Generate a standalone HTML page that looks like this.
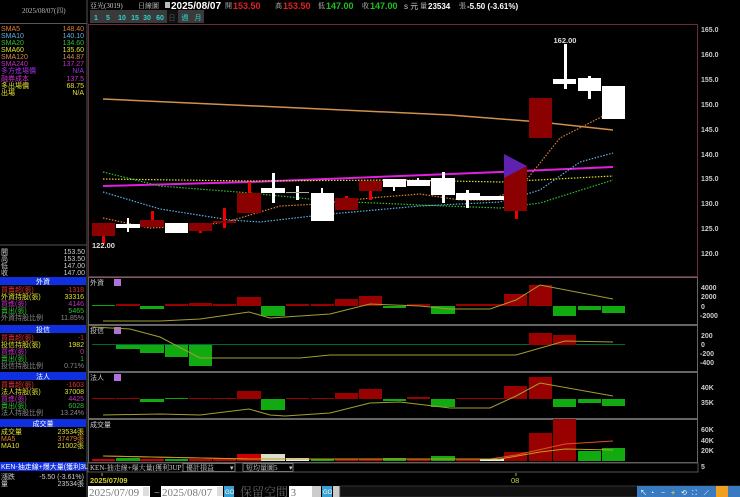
<!DOCTYPE html>
<html><head><meta charset="utf-8"><style>
html,body{margin:0;padding:0;background:#000;width:740px;height:497px;overflow:hidden}
svg{display:block}
text{font-family:"Liberation Sans","Noto Sans CJK TC",sans-serif;font-size:7px}
.s{font-family:"Liberation Serif","Noto Serif CJK SC",serif}
</style></head><body>
<svg width="740" height="497" viewBox="0 0 740 497" xmlns="http://www.w3.org/2000/svg">
<rect width="740" height="497" fill="#000"/>
<!-- left panel -->
<line x1="87" y1="0" x2="87" y2="497" stroke="#555" stroke-width="1"/>
<text x="22" y="13" fill="#bbb" class="s">2025/08/07(四)</text>
<line x1="0" y1="23.5" x2="87" y2="23.5" stroke="#555"/>
<g class="s">
<text x="1" y="31" fill="#e08030">SMA5</text><text x="84" y="31" fill="#e08030" text-anchor="end">148.40</text>
<text x="1" y="38" fill="#60b0e0">SMA10</text><text x="84" y="38" fill="#60b0e0" text-anchor="end">140.10</text>
<text x="1" y="45" fill="#30c030">SMA20</text><text x="84" y="45" fill="#30c030" text-anchor="end">134.60</text>
<text x="1" y="52" fill="#e0e030">SMA60</text><text x="84" y="52" fill="#e0e030" text-anchor="end">135.60</text>
<text x="1" y="59" fill="#d09050">SMA120</text><text x="84" y="59" fill="#d09050" text-anchor="end">144.87</text>
<text x="1" y="66" fill="#c030c0">SMA240</text><text x="84" y="66" fill="#c030c0" text-anchor="end">137.27</text>
<text x="1" y="73" fill="#a030e0">多方進場價</text><text x="84" y="73" fill="#a030e0" text-anchor="end">N/A</text>
<text x="1" y="81" fill="#d030d0">融券成本</text><text x="84" y="81" fill="#d030d0" text-anchor="end">137.5</text>
<text x="1" y="88" fill="#e0e030">多出場價</text><text x="84" y="88" fill="#e0e030" text-anchor="end">68.75</text>
<text x="1" y="95" fill="#e0e030">出場</text><text x="84" y="95" fill="#e0e030" text-anchor="end">N/A</text>
</g>
<line x1="0" y1="245" x2="87" y2="245" stroke="#555"/>
<g class="s" fill="#ccc">
<text x="1" y="254">開</text><text x="85" y="254" text-anchor="end">153.50</text>
<text x="1" y="261">高</text><text x="85" y="261" text-anchor="end">153.50</text>
<text x="1" y="268">低</text><text x="85" y="268" text-anchor="end">147.00</text>
<text x="1" y="275">收</text><text x="85" y="275" text-anchor="end">147.00</text>
</g>
<!-- section boxes -->
<g class="s">
<rect x="0" y="277" width="86" height="8" fill="#1030e0"/><text x="43" y="284" fill="#fff" text-anchor="middle">外資</text>
<text x="1" y="292" fill="#e03030">買賣超(張)</text><text x="84" y="292" fill="#e03030" text-anchor="end">-1318</text>
<text x="1" y="299" fill="#e0e030">外資持股(張)</text><text x="84" y="299" fill="#e0e030" text-anchor="end">33316</text>
<text x="1" y="306" fill="#c030c0">買進(張)</text><text x="84" y="306" fill="#c030c0" text-anchor="end">4146</text>
<text x="1" y="313" fill="#30c030">賣出(張)</text><text x="84" y="313" fill="#30c030" text-anchor="end">5465</text>
<text x="1" y="320" fill="#888">外資持股比例</text><text x="84" y="320" fill="#888" text-anchor="end">11.85%</text>
<rect x="0" y="325" width="86" height="8" fill="#1030e0"/><text x="43" y="332" fill="#fff" text-anchor="middle">投信</text>
<text x="1" y="340" fill="#e03030">買賣超(張)</text><text x="84" y="340" fill="#e03030" text-anchor="end">-1</text>
<text x="1" y="347" fill="#e0e030">投信持股(張)</text><text x="84" y="347" fill="#e0e030" text-anchor="end">1982</text>
<text x="1" y="354" fill="#c030c0">買進(張)</text><text x="84" y="354" fill="#c030c0" text-anchor="end">0</text>
<text x="1" y="361" fill="#30c030">賣出(張)</text><text x="84" y="361" fill="#30c030" text-anchor="end">1</text>
<text x="1" y="368" fill="#888">投信持股比例</text><text x="84" y="368" fill="#888" text-anchor="end">0.71%</text>
<rect x="0" y="372" width="86" height="8" fill="#1030e0"/><text x="43" y="379" fill="#fff" text-anchor="middle">法人</text>
<text x="1" y="387" fill="#e03030">買賣超(張)</text><text x="84" y="387" fill="#e03030" text-anchor="end">-1603</text>
<text x="1" y="394" fill="#e0e030">法人持股(張)</text><text x="84" y="394" fill="#e0e030" text-anchor="end">37008</text>
<text x="1" y="401" fill="#c030c0">買進(張)</text><text x="84" y="401" fill="#c030c0" text-anchor="end">4425</text>
<text x="1" y="408" fill="#30c030">賣出(張)</text><text x="84" y="408" fill="#30c030" text-anchor="end">6028</text>
<text x="1" y="415" fill="#888">法人持股比例</text><text x="84" y="415" fill="#888" text-anchor="end">13.24%</text>
<rect x="0" y="419" width="86" height="8" fill="#1030e0"/><text x="43" y="426" fill="#fff" text-anchor="middle">成交量</text>
<text x="1" y="434" fill="#e0e030">成交量</text><text x="84" y="434" fill="#e0e030" text-anchor="end">23534張</text>
<text x="1" y="441" fill="#e08030">MA5</text><text x="84" y="441" fill="#e08030" text-anchor="end">37479張</text>
<text x="1" y="448" fill="#e0e030">MA10</text><text x="84" y="448" fill="#e0e030" text-anchor="end">21002張</text>
<rect x="0" y="462" width="86" height="9" fill="#1030e0"/><text x="1" y="469" fill="#fff">KEN-抽走線+爆大量(獲利3UP)</text>
<text x="1" y="479" fill="#ccc">漲跌</text><text x="84" y="479" fill="#ccc" text-anchor="end">-5.50 (-3.61%)</text>
<text x="1" y="486" fill="#ccc">量</text><text x="84" y="486" fill="#ccc" text-anchor="end">23534張</text>
</g>
<!-- header -->
<text x="90" y="8" fill="#ccc" class="s">亞光(3019)</text>
<text x="138" y="8" fill="#ccc" class="s">日線圖</text>
<rect x="165" y="2" width="5" height="6" fill="#bbb"/>
<text x="171" y="9" fill="#fff" font-weight="bold" style="font-size:10px">2025/08/07</text>
<text x="225" y="8" fill="#ccc" class="s">開</text><text x="233" y="9" fill="#e02020" font-weight="bold" style="font-size:9px">153.50</text>
<text x="275" y="8" fill="#ccc" class="s">高</text><text x="283" y="9" fill="#e02020" font-weight="bold" style="font-size:9px">153.50</text>
<text x="318" y="8" fill="#ccc" class="s">低</text><text x="326" y="9" fill="#20c020" font-weight="bold" style="font-size:9px">147.00</text>
<text x="362" y="8" fill="#ccc" class="s">收</text><text x="370" y="9" fill="#20c020" font-weight="bold" style="font-size:9px">147.00</text>
<text x="404" y="9" fill="#ccc" style="font-size:8px">s 元</text>
<text x="420" y="8" fill="#ccc" class="s">量</text><text x="428" y="9" fill="#fff" font-weight="bold" style="font-size:8px">23534</text>
<text x="459" y="8" fill="#ccc" class="s">張</text><text x="467" y="9" fill="#fff" font-weight="bold" style="font-size:8px">-5.50 (-3.61%)</text>
<g style="font-size:8px" font-weight="bold">
<rect x="90" y="10" width="114" height="13" fill="#3a3a3a"/>
<rect x="167" y="10" width="11" height="13" fill="#111"/>
<text x="96" y="20" fill="#30d0d0" text-anchor="middle">1</text>
<text x="108" y="20" fill="#30d0d0" text-anchor="middle">5</text>
<text x="122" y="20" fill="#30d0d0" text-anchor="middle">10</text>
<text x="135" y="20" fill="#30d0d0" text-anchor="middle">15</text>
<text x="147" y="20" fill="#30d0d0" text-anchor="middle">30</text>
<text x="160" y="20" fill="#30d0d0" text-anchor="middle">60</text>
<text x="172" y="20" fill="#555" text-anchor="middle" font-weight="normal">日</text>
<text x="185" y="20" fill="#30d0d0" text-anchor="middle" font-weight="normal">週</text>
<text x="198" y="20" fill="#30d0d0" text-anchor="middle" font-weight="normal">月</text>
</g>
<!-- main chart frame -->
<rect x="88.5" y="24.5" width="609" height="252" fill="none" stroke="#6b2a3a"/>
<g fill="#ccc" font-weight="bold" style="font-size:7.5px">
<text x="701" y="32">165.0</text><text x="701" y="57">160.0</text><text x="701" y="82">155.0</text>
<text x="701" y="107">150.0</text><text x="701" y="132">145.0</text><text x="701" y="157">140.0</text>
<text x="701" y="181">135.0</text><text x="701" y="206">130.0</text><text x="701" y="231">125.0</text><text x="701" y="256">120.0</text>
</g>
<!-- MA lines -->
<polyline points="103,99 300,108 450,115 540,122 613,130" fill="none" stroke="#d09050" stroke-width="1.5"/>
<polyline points="103,186 250,182 400,176 500,172 613,167" fill="none" stroke="#e020e0" stroke-width="2"/>
<polyline points="103,179 250,181 400,180 500,182 613,176" fill="none" stroke="#e0e030" stroke-width="1.2" stroke-dasharray="1.5,1.5"/>
<polyline points="103,172 160,186 250,193 330,201 420,205 500,208 540,203 613,180" fill="none" stroke="#30c030" stroke-width="1.2" stroke-dasharray="1.5,1.5"/>
<polyline points="103,192 160,209 230,220 260,222 330,214 420,206 500,202 540,190 580,162 613,153" fill="none" stroke="#60b0e0" stroke-width="1.2" stroke-dasharray="1.5,1.5"/>
<polyline points="103,218 150,228 200,226 230,221 280,206 320,204 370,198 420,194 460,200 490,200 520,188 560,138 613,111" fill="none" stroke="#e08030" stroke-width="1.2" stroke-dasharray="1.5,1.5"/>
<!-- candles -->
<g>
<rect x="102" y="236" width="3" height="8" fill="#e00"/><rect x="92" y="223" width="23" height="13" fill="#8b0000"/>
<rect x="127" y="218" width="2" height="14" fill="#fff"/><rect x="116" y="224" width="24" height="4" fill="#fff"/>
<rect x="151" y="211" width="3" height="10" fill="#e00"/><rect x="140" y="220" width="24" height="7" fill="#8b0000"/>
<rect x="165" y="223" width="23" height="10" fill="#fff"/>
<rect x="199" y="228" width="3" height="5" fill="#e00"/><rect x="189" y="223" width="23" height="8" fill="#8b0000"/>
<rect x="223" y="208" width="3" height="20" fill="#e00"/><rect x="213" y="221" width="23" height="2" fill="#8b0000"/>
<rect x="248" y="182" width="3" height="30" fill="#e00"/><rect x="237" y="193" width="24" height="20" fill="#8b0000"/>
<rect x="272" y="173" width="3" height="30" fill="#fff"/><rect x="261" y="188" width="24" height="5" fill="#fff"/>
<rect x="296" y="186" width="3" height="14" fill="#fff"/><rect x="286" y="192" width="23" height="1" fill="#aaa"/>
<rect x="321" y="188" width="2" height="10" fill="#fff"/><rect x="311" y="193" width="23" height="28" fill="#fff"/>
<rect x="345" y="196" width="3" height="4" fill="#e00"/><rect x="335" y="198" width="23" height="12" fill="#8b0000"/>
<rect x="369" y="190" width="3" height="10" fill="#e00"/><rect x="359" y="181" width="23" height="10" fill="#8b0000"/>
<rect x="393" y="179" width="2" height="12" fill="#fff"/><rect x="383" y="179" width="23" height="8" fill="#fff"/>
<rect x="417" y="178" width="2" height="8" fill="#fff"/><rect x="407" y="180" width="23" height="6" fill="#fff"/>
<rect x="442" y="172" width="3" height="31" fill="#fff"/><rect x="431" y="178" width="24" height="17" fill="#fff"/>
<rect x="466" y="190" width="3" height="18" fill="#fff"/><rect x="456" y="193" width="24" height="7" fill="#fff"/>
<rect x="480" y="196" width="24" height="4" fill="#fff"/>
<rect x="515" y="211" width="3" height="8" fill="#e00"/><rect x="504" y="166" width="23" height="45" fill="#8b0000"/>
<polygon points="504,154 527,166 504,178" fill="#6020b0"/>
<rect x="529" y="98" width="23" height="40" fill="#8b0000"/>
<rect x="564" y="44" width="3" height="45" fill="#fff"/><rect x="553" y="79" width="23" height="5" fill="#fff"/>
<rect x="588" y="76" width="3" height="23" fill="#fff"/><rect x="578" y="78" width="23" height="13" fill="#fff"/>
<rect x="602" y="86" width="23" height="33" fill="#fff"/>
</g>
<text x="565" y="43" fill="#ddd" text-anchor="middle" font-weight="bold" style="font-size:7.5px">162.00</text>
<text x="92" y="248" fill="#ddd" font-weight="bold" style="font-size:7.5px">122.00</text>
<!-- sub panels frames -->
<g fill="none" stroke="#666">
<rect x="88.5" y="277.5" width="609" height="47"/>
<rect x="88.5" y="325.5" width="609" height="46"/>
<rect x="88.5" y="372.5" width="609" height="46"/>
<rect x="88.5" y="419.5" width="609" height="43"/>
</g>
<g class="s" fill="#ccc">
<text x="90" y="285">外資</text><text x="90" y="333">投信</text><text x="90" y="380">法人</text><text x="90" y="427">成交量</text>
</g>
<rect x="114" y="279" width="7" height="7" fill="#b070e0"/><rect x="114" y="327" width="7" height="7" fill="#b070e0"/><rect x="114" y="374" width="7" height="7" fill="#b070e0"/>
<!-- panel1 外資 -->
<g>
<rect x="92" y="305" width="23" height="1" fill="#0a0"/><rect x="116" y="304" width="24" height="2" fill="#900"/>
<rect x="140" y="306" width="24" height="3" fill="#1a1"/><rect x="165" y="304" width="23" height="2" fill="#900"/>
<rect x="189" y="303" width="23" height="3" fill="#900"/><rect x="213" y="304" width="23" height="2" fill="#900"/>
<rect x="237" y="297" width="24" height="9" fill="#900"/><rect x="261" y="306" width="24" height="10" fill="#1a1"/>
<rect x="286" y="304" width="23" height="2" fill="#900"/><rect x="311" y="304" width="23" height="2" fill="#900"/>
<rect x="335" y="299" width="23" height="7" fill="#900"/><rect x="359" y="296" width="23" height="10" fill="#900"/>
<rect x="383" y="306" width="23" height="2" fill="#1a1"/><rect x="407" y="304" width="23" height="2" fill="#900"/>
<rect x="431" y="306" width="24" height="8" fill="#1a1"/><rect x="456" y="304" width="24" height="2" fill="#900"/>
<rect x="480" y="304" width="24" height="2" fill="#900"/><rect x="504" y="294" width="23" height="12" fill="#900"/>
<rect x="529" y="285" width="23" height="21" fill="#900"/><rect x="553" y="306" width="23" height="10" fill="#1a1"/>
<rect x="578" y="306" width="23" height="4" fill="#1a1"/><rect x="602" y="306" width="23" height="7" fill="#1a1"/>
<polyline points="103,321 160,321 200,319 249,312 270,318 285,317 330,314 370,304 420,306 450,309 490,309 516,300 540,285 613,299" fill="none" stroke="#a0a030"/>
</g>
<g fill="#ccc" font-weight="bold" style="font-size:7px">
<text x="701" y="290">4000</text><text x="701" y="299">2000</text><text x="701" y="309">0</text><text x="700" y="318">-2000</text>
<text x="701" y="338">200</text><text x="701" y="347">0</text><text x="700" y="356">-200</text><text x="700" y="365">-400</text>
<text x="701" y="390">40K</text><text x="701" y="405">35K</text>
<text x="701" y="432">60K</text><text x="701" y="443">40K</text><text x="701" y="453">20K</text><text x="701" y="469">5</text>
</g>
<!-- panel2 投信 -->
<g>
<rect x="92" y="344" width="533" height="1" fill="#063"/>
<rect x="116" y="345" width="24" height="4" fill="#1a1"/><rect x="140" y="345" width="24" height="8" fill="#1a1"/>
<rect x="165" y="345" width="23" height="12" fill="#1a1"/><rect x="189" y="345" width="23" height="21" fill="#1a1"/>
<rect x="529" y="333" width="23" height="12" fill="#900"/><rect x="553" y="335" width="23" height="10" fill="#900"/>
<polyline points="92,327 130,329 160,337 200,358 300,358 330,355 516,355 565,341 613,342" fill="none" stroke="#a0a030"/>
</g>
<!-- panel3 法人 -->
<g>
<rect x="92" y="398" width="23" height="1" fill="#900"/><rect x="116" y="398" width="24" height="1" fill="#900"/>
<rect x="140" y="399" width="24" height="3" fill="#1a1"/><rect x="165" y="398" width="23" height="1" fill="#0a0"/>
<rect x="189" y="398" width="23" height="1" fill="#900"/><rect x="213" y="398" width="23" height="1" fill="#900"/>
<rect x="237" y="391" width="24" height="8" fill="#900"/><rect x="261" y="399" width="24" height="11" fill="#1a1"/>
<rect x="286" y="398" width="23" height="1" fill="#900"/><rect x="311" y="398" width="23" height="1" fill="#900"/>
<rect x="335" y="393" width="23" height="6" fill="#900"/><rect x="359" y="389" width="23" height="10" fill="#900"/>
<rect x="383" y="399" width="23" height="2" fill="#1a1"/><rect x="407" y="397" width="23" height="2" fill="#900"/>
<rect x="431" y="399" width="24" height="8" fill="#1a1"/><rect x="456" y="398" width="24" height="1" fill="#900"/>
<rect x="480" y="398" width="24" height="1" fill="#900"/><rect x="504" y="386" width="23" height="13" fill="#900"/>
<rect x="529" y="377" width="23" height="22" fill="#900"/><rect x="553" y="399" width="23" height="8" fill="#1a1"/>
<rect x="578" y="399" width="23" height="4" fill="#1a1"/><rect x="602" y="399" width="23" height="7" fill="#1a1"/>
<polyline points="103,415 160,414 200,415 249,409 270,415 285,416 330,413 370,403 400,402 450,408 490,408 516,396 540,383 613,396" fill="none" stroke="#a0a030"/>
</g>
<!-- panel4 volume -->
<g>
<rect x="92" y="459" width="23" height="2" fill="#c00"/><rect x="116" y="458" width="24" height="3" fill="#1a1"/>
<rect x="140" y="459" width="24" height="2" fill="#c00"/><rect x="165" y="459" width="23" height="2" fill="#1a1"/>
<rect x="189" y="459" width="23" height="2" fill="#c00"/><rect x="213" y="459" width="23" height="2" fill="#c00"/>
<rect x="237" y="454" width="24" height="7" fill="#c00"/><rect x="261" y="454" width="24" height="7" fill="#ddc"/>
<rect x="286" y="458" width="23" height="3" fill="#eee"/><rect x="311" y="459" width="23" height="2" fill="#1a1"/>
<rect x="335" y="459" width="23" height="2" fill="#c00"/><rect x="359" y="459" width="23" height="2" fill="#c00"/>
<rect x="383" y="458" width="23" height="3" fill="#1a1"/><rect x="407" y="459" width="23" height="2" fill="#c00"/>
<rect x="431" y="456" width="24" height="5" fill="#1a1"/><rect x="456" y="459" width="24" height="2" fill="#c00"/>
<rect x="480" y="459" width="24" height="2" fill="#eee"/><rect x="504" y="452" width="23" height="9" fill="#900"/>
<rect x="529" y="433" width="23" height="28" fill="#900"/><rect x="553" y="419" width="23" height="42" fill="#900"/>
<rect x="578" y="451" width="23" height="10" fill="#1a1"/><rect x="602" y="448" width="23" height="13" fill="#1a1"/>
<polyline points="103,456 250,459 490,459 516,455 565,444 613,441" fill="none" stroke="#e05020"/>
<polyline points="103,456 250,459 500,459 540,452 565,449 613,450" fill="none" stroke="#c0a020"/>
</g>
<!-- selector bar -->
<rect x="88" y="463" width="610" height="9" fill="#000" stroke="#555"/>
<text x="90" y="470" fill="#ccc" class="s">KEN-抽走線+爆大量(獲利3UP)</text>
<rect x="183" y="463.5" width="52" height="8" fill="none" stroke="#777"/><text x="186" y="470" fill="#ccc" class="s">優計損益</text><text x="230" y="470" fill="#ccc">▾</text>
<rect x="243" y="463.5" width="50" height="8" fill="none" stroke="#777"/><text x="246" y="470" fill="#ccc" class="s">短均量圖5</text><text x="289" y="470" fill="#ccc">▾</text>
<line x1="102" y1="473" x2="102" y2="476" stroke="#aa3"/><line x1="516" y1="473" x2="516" y2="476" stroke="#aa3"/>
<text x="90" y="483" fill="#d0d030" font-weight="bold" style="font-size:7.5px">2025/07/09</text>
<text x="511" y="483" fill="#d0d030" style="font-size:7.5px">08</text>
<!-- bottom row -->
<rect x="88" y="486" width="62" height="11" fill="#fff"/><text x="89" y="496" fill="#777" class="s" style="font-size:11px">2025/07/09</text>
<rect x="143" y="487" width="6" height="9" fill="#ddd"/>
<text x="154" y="496" fill="#999" style="font-size:10px">~</text>
<rect x="161" y="486" width="62" height="11" fill="#fff"/><text x="162" y="496" fill="#777" class="s" style="font-size:11px">2025/08/07</text>
<rect x="217" y="487" width="6" height="9" fill="#ddd"/>
<rect x="224" y="486" width="10" height="11" fill="#3aa0d0"/><text x="225" y="494" fill="#fff" style="font-size:6px">GO</text>
<text x="240" y="496" fill="#666" class="s" style="font-size:12px">保留空間</text>
<rect x="289" y="486" width="23" height="11" fill="#fff"/><text x="291" y="496" fill="#666" class="s" style="font-size:10px">3</text>
<rect x="312" y="486" width="9" height="11" fill="#ccc"/>
<rect x="322" y="486" width="10" height="11" fill="#3aa0d0"/><text x="323" y="494" fill="#fff" style="font-size:6px">GO</text>
<rect x="333" y="486" width="7" height="11" fill="#ccc"/>
<rect x="340" y="486" width="400" height="11" fill="#111" stroke="#333"/>
<rect x="637" y="486" width="103" height="11" fill="#3a7ac0"/>
<g fill="#fff" style="font-size:8px"><text x="640" y="495">↖</text><text x="650" y="495">◔</text><text x="661" y="495">−</text><text x="671" y="495" fill="#ff0">+</text><text x="681" y="495">⟲</text><text x="692" y="495">⛶</text><text x="704" y="495">⟋</text></g>
<rect x="716" y="486" width="12" height="11" fill="#f0a020"/>
</svg>
</body></html>
